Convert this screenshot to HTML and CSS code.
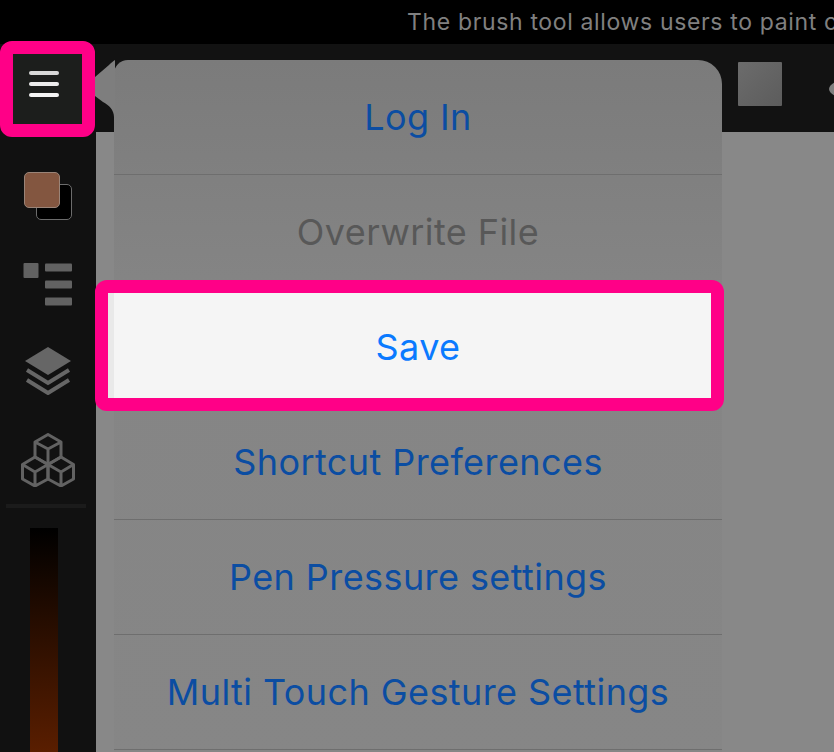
FILE: index.html
```html
<!DOCTYPE html>
<html lang="en">
<head>
<meta charset="utf-8">
<title>Menu</title>
<link rel="stylesheet" href="styles.css">
</head>
<body>
<div class="app">
  <header class="tip"><span class="tip-text">The brush tool allows users to paint on</span></header>
  <div class="toolbar">
    <div class="tool-swatch"></div>
    <svg class="tool-end" width="6" height="16" viewBox="0 0 6 16"><path d="M6 1 C3 3 0 5 0 8 C0 11 3 13 6 15 Z" fill="#808080"/></svg>
  </div>
  <div class="main">
    <aside class="sidebar">
      <div class="color-pair"><div class="color-back"></div><div class="color-front"></div></div>
      <svg class="icon icon-list" width="50" height="44" viewBox="0 0 50 44">
        <rect x="0.5" y="0" width="15" height="15" rx="1" fill="#626262"/>
        <rect x="22" y="0.5" width="27" height="8" rx="1" fill="#626262"/>
        <rect x="22" y="17.500" width="27" height="8" rx="1" fill="#626262"/>
        <rect x="22" y="34.500" width="27" height="8" rx="1" fill="#626262"/>
      </svg>
      <svg class="icon icon-layers" width="48" height="48" viewBox="0 0 48 48">
        <path d="M24 0 L47 14 L24 28 L1 14 Z" fill="#666"/>
        <path d="M3 23 L24 36 L45 23" fill="none" stroke="#666" stroke-width="4"/>
        <path d="M3 33 L24 46 L45 33" fill="none" stroke="#666" stroke-width="4"/>
      </svg>
      <svg class="icon icon-cubes" width="54" height="54" viewBox="0 0 54 54" fill="none" stroke="#626262" stroke-width="3" stroke-linejoin="round">
        <path d="M27 1.500 L40 9 V24 L27 31.500 L14 24 V9 Z M14 9 L27 16 L40 9 M27 16 V31.500"/>
        <path d="M14 24 L27 31.500 V46 L14 53 L1.500 46 V31.500 Z M1.500 31.500 L14 39 L27 31.500 M14 39 V53"/>
        <path d="M40 24 L52.500 31.500 V46 L40 53 L27 46 V31.500 Z M27 31.500 L40 39 L52.500 31.500 M40 39 V53"/>
      </svg>
      <div class="divider"></div>
      <div class="slider"></div>
    </aside>
    <div class="canvas"></div>
  </div>
  <div class="menu-btn-frame"><svg class="burger" width="32" height="26" viewBox="0 0 32 26"><g fill="none" stroke-width="4" stroke-linecap="round"><path d="M3 2 H29" stroke="#d8d8d8"/><path d="M3 13 H29" stroke="#ececec"/><path d="M3 24 H29" stroke="#f4f4f4"/></g></svg></div>
  <div class="popover">
    <svg class="arrow" width="20" height="60" viewBox="0 0 20 60"><path d="M20 0 V60 H19 V57 C19 50 14 45 8 42 L0 36 V17 L14 5 C16 3 18 1 20 0 Z" fill="#7e7e7e"/></svg>
    <ul class="menu">
      <li class="item"><span class="link">Log In</span></li>
      <li class="item"><span class="off">Overwrite File</span></li>
      <li class="item item-save"><span class="save-text">Save</span></li>
      <li class="item"><span class="link">Shortcut Preferences</span></li>
      <li class="item"><span class="link">Pen Pressure settings</span></li>
      <li class="item"><span class="link">Multi Touch Gesture Settings</span></li>
    </ul>
  </div>
  <div class="save-frame"></div>
</div>
</body>
</html>
```
FILE: styles.css
```css
* { box-sizing: border-box; }
html, body { margin: 0; padding: 0; height: 100%; overflow: hidden; background: #888; }
.app { position: relative; width: 834px; height: 752px; overflow: hidden; font-family: Inter, "Liberation Sans", sans-serif; }
.tip { height: 44px; background: #000; display: flex; align-items: center; padding-left: 407px; white-space: nowrap; overflow: hidden; }
.tip-text { color: #808080; font-size: 23px; letter-spacing: 0.65px; }
.toolbar { height: 88px; background: #121212; display: flex; align-items: flex-start; padding-top: 18px; padding-left: 738px; position: relative; }
.tool-swatch { width: 44px; height: 44px; background: linear-gradient(135deg, #6c6c6c, #5c5c5c); border-radius: 1px; flex: none; }
.tool-end { flex: none; margin: 19px 0 0 47px; }
.main { display: flex; height: 620px; }
.sidebar { width: 96px; background: #111; display: flex; flex-direction: column; align-items: flex-start; flex: none; position: relative; margin-top: -88px; padding-top: 128px; }
.canvas { flex: 1; background: #888; }
.color-pair { position: relative; width: 48px; height: 48px; margin-left: 24px; }
.color-back { position: absolute; left: 12px; top: 12px; width: 36px; height: 36px; background: #000; border: 1px solid #6c6c6c; border-radius: 5px; }
.color-front { position: absolute; left: 0; top: 0; width: 36px; height: 36px; background: #835640; border: 1px solid #9a8478; border-radius: 5px; }
.icon { display: block; flex: none; }
.icon-list { margin: 47px 0 0 23px; }
.icon-layers { margin: 40px 0 0 24px; }
.icon-cubes { margin: 38px 0 0 21px; }
.divider { width: 80px; height: 4px; background: #1b1b1b; margin: 17px 0 0 6px; flex: none; }
.slider { width: 28px; height: 224px; margin: 20px 0 0 30px; flex: none; background: linear-gradient(#000, #5a1e00); }
.menu-btn-frame { position: absolute; left: 0; top: 41px; width: 95px; height: 96px; border: 13px solid #ff0087; border-radius: 12px; background: #1c1e1c; display: flex; align-items: flex-start; justify-content: center; padding-top: 17px; padding-right: 7px; }
.burger { filter: blur(0.4px); }
.popover { position: absolute; left: 114px; top: 60px; width: 608px; height: 720px; background: linear-gradient(#7b7b7b, #858585 240px, #868686); border-radius: 14px 24px 0 0; }
.arrow { position: absolute; left: -19px; top: 0; }
.menu { list-style: none; margin: 0; padding: 0; }
.item { position: relative; height: 115px; display: flex; align-items: center; justify-content: center; border-bottom: 1px solid #6e6e6e; font-size: 36px; letter-spacing: 0.42px; }
.link { color: #0b4da2; }
.off { color: #585858; }
.item-save { background: #f5f5f5; }
.item-save::before { content: ""; position: absolute; left: -6px; top: 0; bottom: 0; width: 6px; background: #e9e9e9; }
.save-text { color: #0a7aff; }
.save-frame { position: absolute; left: 95px; top: 280px; width: 629px; height: 131px; border: 13px solid #ff0087; border-radius: 12px; }
```
